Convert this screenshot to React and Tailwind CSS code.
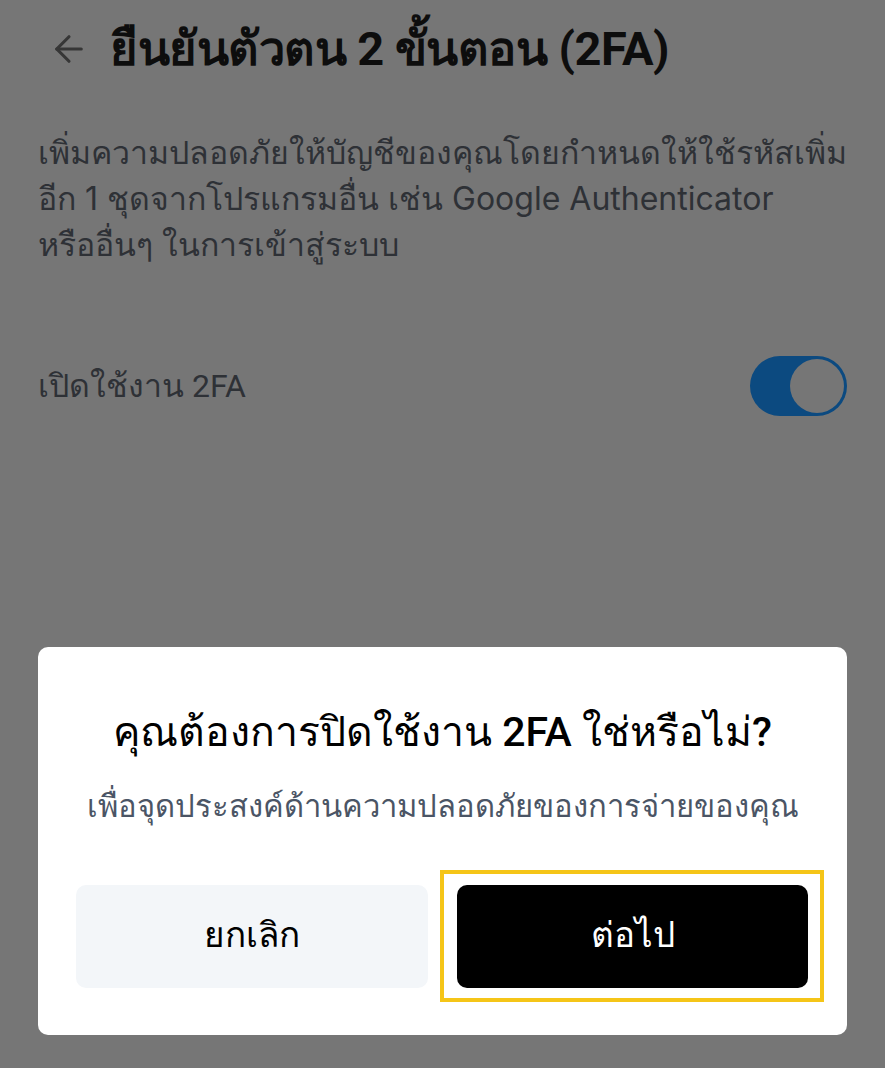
import { ArrowLeft } from "lucide-react";

export default function App() {
  return (
    <div
      className="relative w-[885px] h-[1068px] overflow-hidden bg-[#767676]"
      style={{ fontFamily: "Roboto, 'Noto Sans', sans-serif" }}
    >
      {/* page, drawn as seen under the dim overlay */}
      <div className="flex flex-col px-[38px] pt-[19px]">
        <div className="flex items-center gap-[20px] h-[60px]">
          <ArrowLeft size={42} strokeWidth={1.8} className="text-[#363636] ml-[10px]" />
          <h1 className="text-[47px] font-bold text-[#0d0d0d] tracking-[-0.5px]">ยืนยันตัวตน 2 ขั้นตอน (2FA)</h1>
        </div>

        <p
          className="mt-[51px] text-[32px] leading-[46px] text-[#2e3136]"
          style={{ fontFamily: "Inter, Roboto, sans-serif" }}
        >
          เพิ่มความปลอดภัยให้บัญชีของคุณโดยกำหนดให้ใช้รหัสเพิ่ม
          <br />
          อีก 1 ชุดจากโปรแกรมอื่น เช่น Google Authenticator
          <br />
          หรืออื่นๆ ในการเข้าสู่ระบบ
        </p>

        <div className="mt-[88px] flex items-center justify-between">
          <span className="text-[32px] text-[#2e3136]">เปิดใช้งาน 2FA</span>
          <div className="w-[97px] h-[60px] rounded-full bg-[#0c4a80] flex items-center justify-end pr-[3px]">
            <div className="w-[54px] h-[54px] rounded-full bg-[#767676]" />
          </div>
        </div>
      </div>

      {/* dialog */}
      <div className="absolute left-[38px] top-[647px] w-[809px] h-[388px] bg-white rounded-[10px] flex flex-col items-center">
        <h2 className="mt-[55px] text-[41px] font-medium text-black">คุณต้องการปิดใช้งาน 2FA ใช่หรือไม่?</h2>
        <p className="mt-[20px] text-[31px] text-[#4b5565]">เพื่อจุดประสงค์ด้านความปลอดภัยของการจ่ายของคุณ</p>
        <div className="mt-[55px] w-full flex items-center px-[38px] gap-[29px]">
          <button className="w-[352px] h-[103px] rounded-[10px] bg-[#f3f6f9] text-[35px] text-black">
            ยกเลิก
          </button>
          <div className="relative">
            <button className="w-[351px] h-[103px] rounded-[10px] bg-black text-[35px] text-white">
              ต่อไป
            </button>
            <div className="absolute left-[-17px] top-[-15px] w-[384px] h-[132px] border-4 border-[#f5c518]" />
          </div>
        </div>
      </div>
    </div>
  );
}
